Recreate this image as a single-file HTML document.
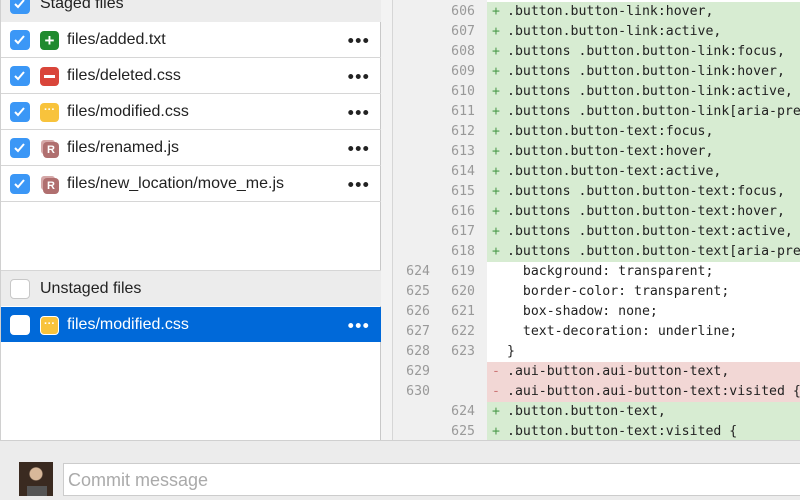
<!DOCTYPE html>
<html><head><style>
*{margin:0;padding:0;box-sizing:border-box}
body{width:800px;height:500px;overflow:hidden;background:#ececec;font-family:"Liberation Sans",sans-serif;position:relative}
#left{position:absolute;left:0;top:0;width:381px;height:440px;background:#fff;border-right:1px solid #c8c8c8;border-left:1px solid #d0d0d0}
.hdr{position:absolute;left:0;width:380px;height:36px;background:#ececec;font-size:16px;color:#222}
.hdr span{position:absolute;left:39px;top:9px}
.row{position:absolute;left:0;width:380px;height:36px;border-bottom:1px solid #d6d6d6;font-size:16px;color:#222}
.row .t{position:absolute;left:66px;top:9px}
.cb{position:absolute;left:9px;top:8px;width:20px;height:20px;border-radius:4px;background:#3b97f6}
.cb.e{background:#fff;border:1px solid #c8c8c8}
.cb svg{position:absolute;left:3px;top:3px}
.ic{position:absolute;left:39px;top:9px;width:19px;height:19px;border-radius:4px;color:#fff;font-size:11px;font-weight:bold;text-align:center;line-height:19px}
.dots{position:absolute;right:12px;top:16px;width:22px;height:5px;background:radial-gradient(circle,#222 2.2px,transparent 2.7px) 0 0/7.5px 5px repeat-x}
.sel .dots{background:radial-gradient(circle,#fff 2.2px,transparent 2.7px) 0 0/7.5px 5px repeat-x}
#gap{position:absolute;left:381px;top:0;width:12px;height:440px;background:#f3f3f3;border-right:1px solid #d6d6d6}
#gut{position:absolute;left:393px;top:0;width:94px;height:440px;background:#f0f0f0}
#code{position:absolute;left:487px;top:0;width:313px;height:440px;background:#fff}
.l{position:absolute;height:20px;font-family:"DejaVu Sans Mono","Liberation Mono",monospace;font-size:13.2px;line-height:20px;white-space:pre;color:#222}
.n{position:absolute;font-family:"DejaVu Sans Mono",monospace;font-size:13.2px;color:#999;line-height:20px;text-align:right;width:40px}
#bot{position:absolute;left:0;top:440px;width:800px;height:60px;background:#ececec;border-top:1px solid #d0d0d0}
</style></head><body>
<div id="left">
<div class="hdr" style="top:-14px"><div class="cb" style="top:8px"><svg width="13" height="13"><path d="M2 7l3 3 6-7" stroke="#fff" stroke-width="2" fill="none"/></svg></div><span>Staged files</span></div>
<div class="row" style="top:22px"><div class="cb"><svg width="13" height="13"><path d="M2 7l3 3 6-7" stroke="#fff" stroke-width="2" fill="none"/></svg></div><div class="ic" style="background:#1f8a2e;font-size:17px">+</div><span class="t">files/added.txt</span><span class="dots"></span></div>
<div class="row" style="top:58px"><div class="cb"><svg width="13" height="13"><path d="M2 7l3 3 6-7" stroke="#fff" stroke-width="2" fill="none"/></svg></div><div class="ic" style="background:#d9453a"><div style="position:absolute;left:4px;top:8px;width:11px;height:3px;background:#fff"></div></div><span class="t">files/deleted.css</span><span class="dots"></span></div>
<div class="row" style="top:94px"><div class="cb"><svg width="13" height="13"><path d="M2 7l3 3 6-7" stroke="#fff" stroke-width="2" fill="none"/></svg></div><div class="ic" style="background:#f8c33c;line-height:15px">···</div><span class="t">files/modified.css</span><span class="dots"></span></div>
<div class="row" style="top:130px"><div class="cb"><svg width="13" height="13"><path d="M2 7l3 3 6-7" stroke="#fff" stroke-width="2" fill="none"/></svg></div><div class="ic" style="background:#b06f6f;left:42px;top:12px;width:16px;height:16px;line-height:16px;box-shadow:-3px -3px 0 -1px #d5a8a8">R</div><span class="t">files/renamed.js</span><span class="dots"></span></div>
<div class="row" style="top:166px"><div class="cb"><svg width="13" height="13"><path d="M2 7l3 3 6-7" stroke="#fff" stroke-width="2" fill="none"/></svg></div><div class="ic" style="background:#b06f6f;left:42px;top:12px;width:16px;height:16px;line-height:16px;box-shadow:-3px -3px 0 -1px #d5a8a8">R</div><span class="t">files/new_location/move_me.js</span><span class="dots"></span></div>
<div class="hdr" style="top:270px;border-top:1px solid #d6d6d6"><div class="cb e"></div><span>Unstaged files</span></div>
<div class="row sel" style="top:307px;height:35px;background:#0069d9;color:#fff;border:none"><div class="cb e" style="border-color:#fff"></div><div class="ic" style="background:#f8c33c;border:1px solid #fff;line-height:14px">···</div><span class="t">files/modified.css</span><span class="dots"></span></div>
</div>
<div id="gap"></div>
<div id="gut"></div>
<div id="code"></div>
<div id="lines"></div>
<script>
const L=[
[null,606,'+','.button.button-link:hover,'],
[null,607,'+','.button.button-link:active,'],
[null,608,'+','.buttons .button.button-link:focus,'],
[null,609,'+','.buttons .button.button-link:hover,'],
[null,610,'+','.buttons .button.button-link:active,'],
[null,611,'+','.buttons .button.button-link[aria-pressed'],
[null,612,'+','.button.button-text:focus,'],
[null,613,'+','.button.button-text:hover,'],
[null,614,'+','.button.button-text:active,'],
[null,615,'+','.buttons .button.button-text:focus,'],
[null,616,'+','.buttons .button.button-text:hover,'],
[null,617,'+','.buttons .button.button-text:active,'],
[null,618,'+','.buttons .button.button-text[aria-pressed'],
[624,619,' ','  background: transparent;'],
[625,620,' ','  border-color: transparent;'],
[626,621,' ','  box-shadow: none;'],
[627,622,' ','  text-decoration: underline;'],
[628,623,' ','}'],
[629,null,'-','.aui-button.aui-button-text,'],
[630,null,'-','.aui-button.aui-button-text:visited {'],
[null,624,'+','.button.button-text,'],
[null,625,'+','.button.button-text:visited {']];
let h='';
L.forEach((r,i)=>{const y=2+i*20;const bg=r[2]=='+'?'#d7ecd2':r[2]=='-'?'#f2d7d5':'#fff';const sc=r[2]=='+'?'#4a9a4a':'#c77';
h+=`<div class="l" style="left:487px;top:${y}px;width:313px;background:${bg};overflow:hidden"><span style="position:absolute;left:5px;color:${sc}">${r[2]}</span><span style="position:absolute;left:20px">${r[3]}</span></div>`;
if(r[0])h+=`<div class="n" style="left:390px;top:${y}px">${r[0]}</div>`;
if(r[1])h+=`<div class="n" style="left:435px;top:${y}px">${r[1]}</div>`;});
document.getElementById('lines').innerHTML=h;
</script>
<div id="bot">
<div style="position:absolute;left:19px;top:21px;width:34px;height:34px;background:radial-gradient(circle at 50% 35%,#d8b89a 0 6px,#3a2a20 7px 100%)"><div style="position:absolute;left:8px;bottom:0;width:20px;height:10px;background:#555"></div></div>
<div style="position:absolute;left:63px;top:22px;width:740px;height:33px;background:#fff;border:1px solid #ccc;font-size:18px;color:#aaa;padding:6px 4px">Commit message</div>
</div>
</body></html>
